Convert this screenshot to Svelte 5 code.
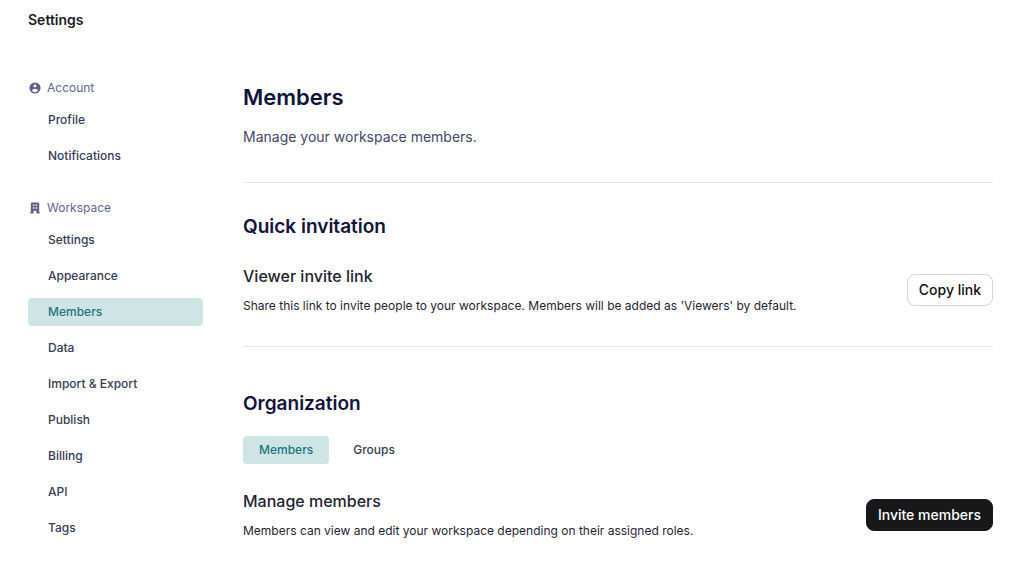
<script>
  const groups = [
    { title: 'Account', icon: 'user', items: ['Profile', 'Notifications'] },
    {
      title: 'Workspace',
      icon: 'building',
      items: ['Settings', 'Appearance', 'Members', 'Data', 'Import & Export', 'Publish', 'Billing', 'API', 'Tags']
    }
  ];
  let page = $state('Members');
  let tab = $state('Members');
</script>

<div class="app">
  <header>Settings</header>
  <div class="body">
    <nav>
      {#each groups as group}
        <section class="group">
          <h2>
            <svg viewBox="0 0 20 20" aria-hidden="true">
              {#if group.icon === 'user'}
                <path fill-rule="evenodd" d="M18 10a8 8 0 11-16 0 8 8 0 0116 0zm-6-3a2 2 0 11-4 0 2 2 0 014 0zm-2 4a5 5 0 00-4.546 2.916A5.986 5.986 0 0010 16a5.986 5.986 0 004.546-2.084A5 5 0 0010 11z" clip-rule="evenodd" />
              {:else}
                <path fill-rule="evenodd" d="M4 4a2 2 0 012-2h8a2 2 0 012 2v12a1 1 0 110 2h-3a1 1 0 01-1-1v-2a1 1 0 00-1-1H9a1 1 0 00-1 1v2a1 1 0 01-1 1H4a1 1 0 110-2V4zm3 1h2v2H7V5zm2 4H7v2h2V9zm2-4h2v2h-2V5zm2 4h-2v2h2V9z" clip-rule="evenodd" />
              {/if}
            </svg>
            {group.title}
          </h2>
          <ul>
            {#each group.items as item}
              <li><a href="#{item}" class:active={page === item} onclick={() => (page = item)}>{item}</a></li>
            {/each}
          </ul>
        </section>
      {/each}
    </nav>
    <main>
      <div class="intro">
        <h1>Members</h1>
        <p>Manage your workspace members.</p>
      </div>
      <section class="quick">
        <h2>Quick invitation</h2>
        <div class="row">
          <div>
            <h3>Viewer invite link</h3>
            <p>Share this link to invite people to your workspace. Members will be added as 'Viewers' by default.</p>
          </div>
          <button class="btn">Copy link</button>
        </div>
      </section>
      <section class="org">
        <h2>Organization</h2>
        <div class="tabs">
          {#each ['Members', 'Groups'] as name}
            <button class:active={tab === name} onclick={() => (tab = name)}>{name}</button>
          {/each}
        </div>
        <div class="row">
          <div>
            <h3>Manage members</h3>
            <p>Members can view and edit your workspace depending on their assigned roles.</p>
          </div>
          <button class="btn dark">Invite members</button>
        </div>
      </section>
    </main>
  </div>
</div>

<style>
  :global(body) { background: #fff; }
  .app { font-family: Inter, sans-serif; color: #1f2430; font-size: 12px; line-height: 20px; }
  h1, h2, h3, p, ul { margin: 0; padding: 0; }
  button { font: inherit; cursor: pointer; }
  header { padding: 10px 28px; font-size: 14px; font-weight: 600; color: #1c1c1f; }
  .body { display: flex; gap: 40px; padding: 38px 30px 0 28px; }
  nav { flex: 0 0 175px; }
  .group { margin-bottom: 28px; }
  .group:last-child { margin-bottom: 0; }
  .group h2 { display: flex; align-items: center; gap: 5px; font-size: 12px; font-weight: 400; color: #63668a; }
  svg { width: 14px; height: 14px; fill: #5f6288; }
  ul { list-style: none; display: flex; flex-direction: column; gap: 8px; padding-top: 8px; }
  a { display: block; padding: 4px 20px; border-radius: 4px; color: #363b56; font-weight: 500; text-decoration: none; }
  a.active { background: #cfe4e5; color: #1b7680; }
  main { flex: 1; min-width: 0; }
  .intro { padding: 2px 0 35px; border-bottom: 1px solid #e4e5e7; }
  h1 { font-size: 22px; line-height: 34px; font-weight: 600; color: #11143a; }
  .intro p { font-size: 14px; margin-top: 13px; color: #44475f; }
  .quick { padding: 30px 0; border-bottom: 1px solid #e4e5e7; }
  main h2 { font-size: 19px; line-height: 28px; font-weight: 600; color: #11143a; }
  .row { display: flex; align-items: center; justify-content: space-between; gap: 20px; margin-top: 22px; }
  .tabs + .row { margin-top: 24px; }
  h3 { font-size: 16px; line-height: 26px; font-weight: 500; color: #1f2430; }
  .row p { margin-top: 7px; line-height: 20px; }
  .btn { padding: 5px 11px; border: 1px solid #d4d4d8; border-radius: 8px; background: #fff; color: #111113; font-size: 14px; font-weight: 500; white-space: nowrap; }
  .btn.dark { background: #18181a; border-color: #18181a; color: #fff; }
  .org { padding: 43px 0 20px; }
  .tabs { display: flex; gap: 8px; margin-top: 18px; }
  .tabs button { padding: 4px 16px; border: 0; border-radius: 4px; background: none; color: #363b56; font-weight: 500; }
  .tabs button.active { background: #cfe4e5; color: #1b7680; }
</style>
